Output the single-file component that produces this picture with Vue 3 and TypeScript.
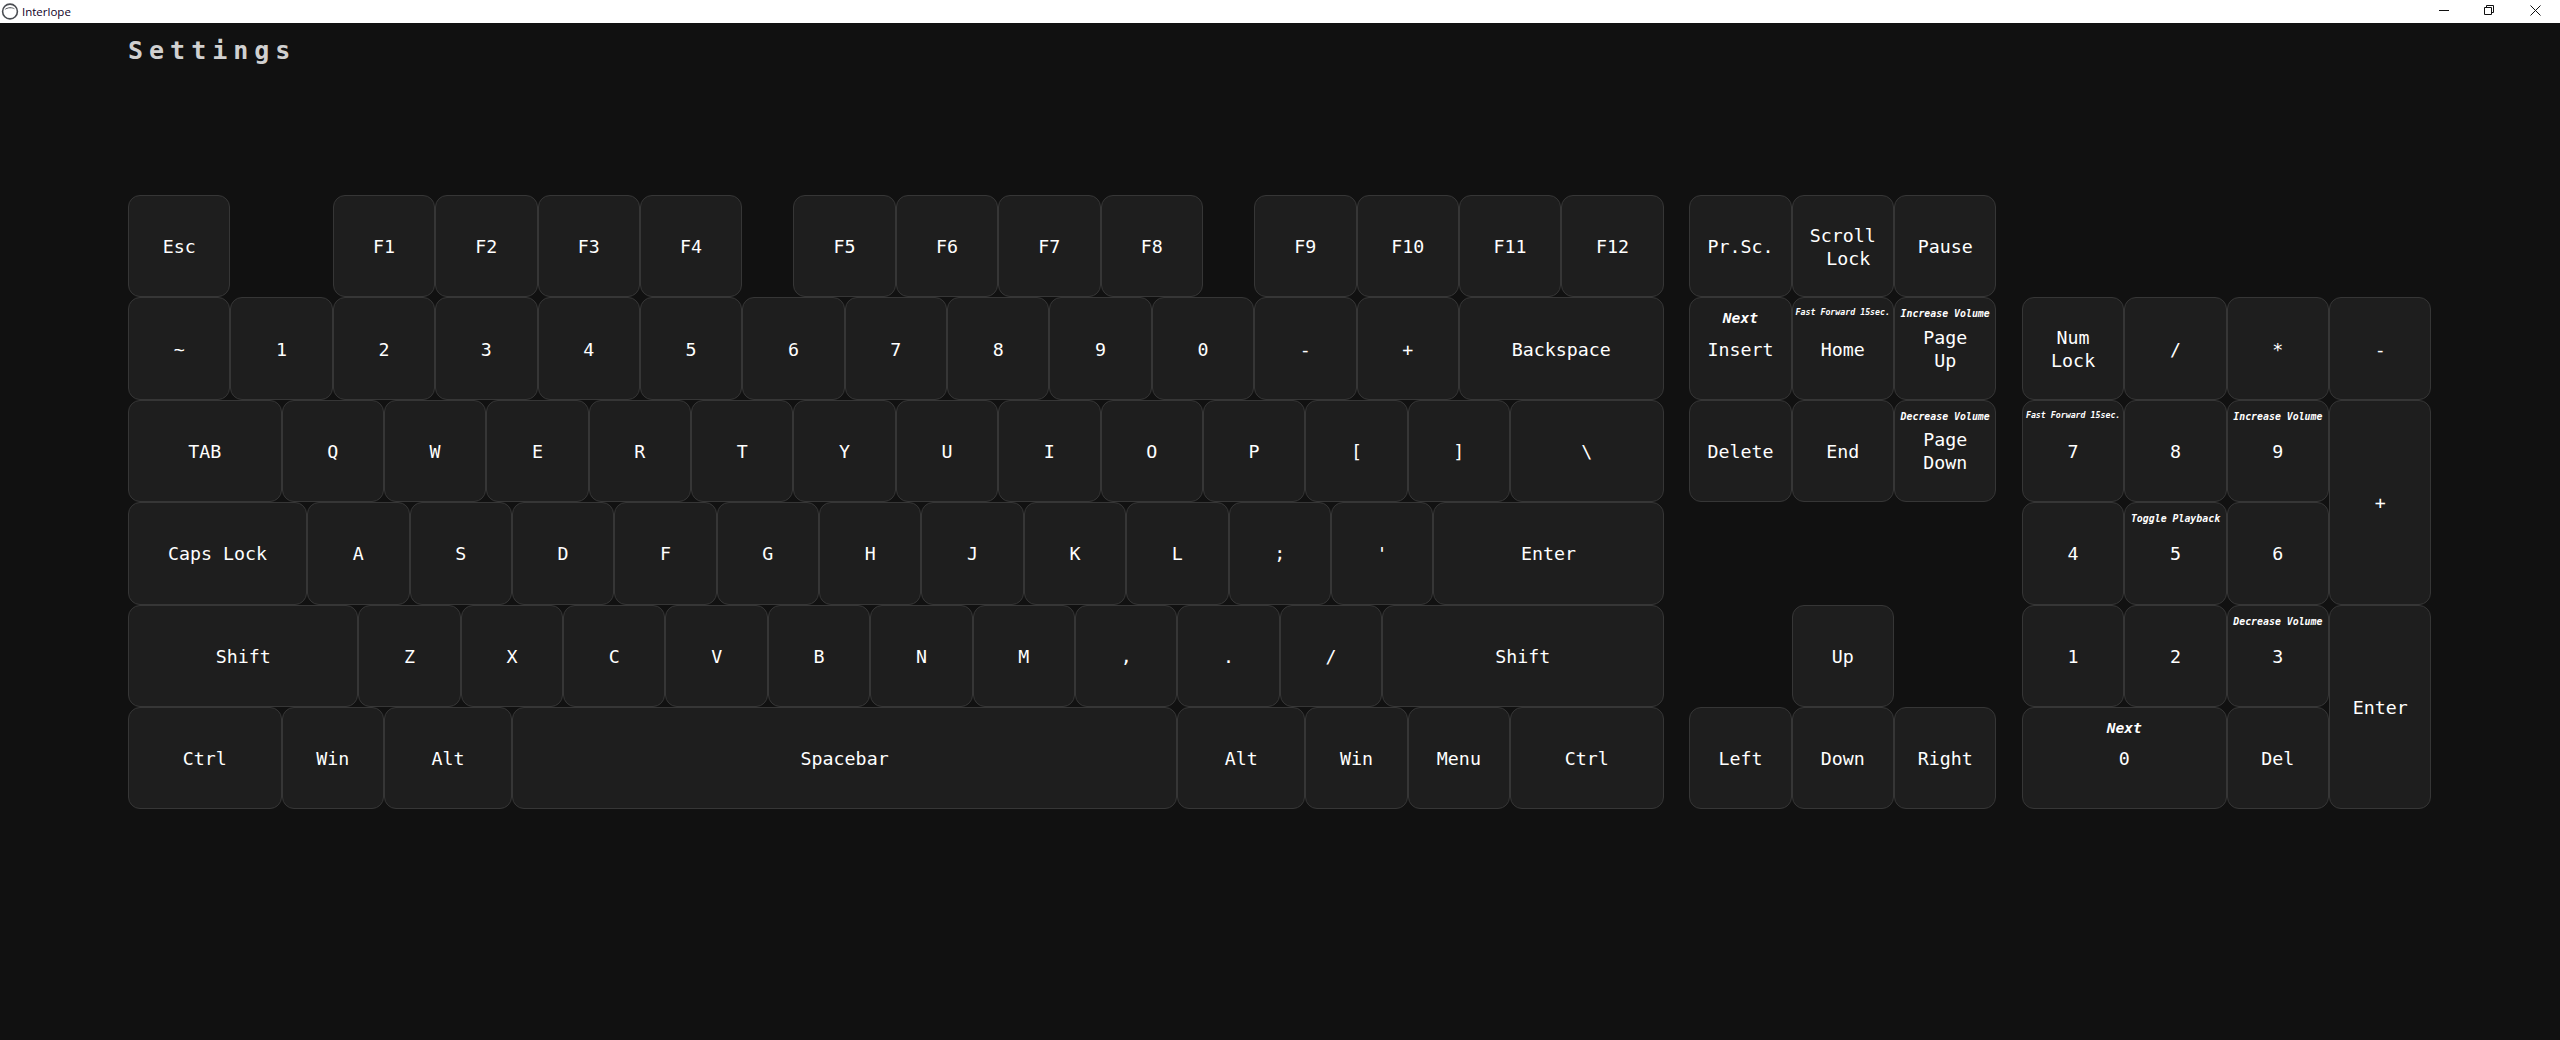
<script setup lang="ts">
interface Key {
  label: string
  span?: number
  rows?: number
  sub?: string
  subKind?: 'next' | 'mid' | 'tiny'
}
interface Placed extends Key {
  col: number
  row: number
}

const U = 4 // grid tracks per key unit

const rows: { row: number; start: number; keys: (Key | number)[] }[] = [
  {
    row: 1,
    start: 0,
    keys: [
      { label: 'Esc' }, 1,
      { label: 'F1' }, { label: 'F2' }, { label: 'F3' }, { label: 'F4' }, 0.5,
      { label: 'F5' }, { label: 'F6' }, { label: 'F7' }, { label: 'F8' }, 0.5,
      { label: 'F9' }, { label: 'F10' }, { label: 'F11' }, { label: 'F12' }, 0.25,
      { label: 'Pr.Sc.' }, { label: 'Scroll\n\u00a0Lock' }, { label: 'Pause' }
    ]
  },
  {
    row: 2,
    start: 0,
    keys: [
      ...['~', '1', '2', '3', '4', '5', '6', '7', '8', '9', '0', '-', '+'].map((label) => ({ label })),
      { label: 'Backspace', span: 2 }, 0.25,
      { label: 'Insert', sub: 'Next', subKind: 'next' },
      { label: 'Home', sub: 'Fast Forward 15sec.', subKind: 'tiny' },
      { label: 'Page\nUp', sub: 'Increase Volume', subKind: 'mid' }, 0.25,
      { label: 'Num\nLock' }, { label: '/' }, { label: '*' }, { label: '-' }
    ]
  },
  {
    row: 3,
    start: 0,
    keys: [
      { label: 'TAB', span: 1.5 },
      ...['Q', 'W', 'E', 'R', 'T', 'Y', 'U', 'I', 'O', 'P', '[', ']'].map((label) => ({ label })),
      { label: '\\', span: 1.5 }, 0.25,
      { label: 'Delete' }, { label: 'End' },
      { label: 'Page\nDown', sub: 'Decrease Volume', subKind: 'mid' }, 0.25,
      { label: '7', sub: 'Fast Forward 15sec.', subKind: 'tiny' },
      { label: '8' },
      { label: '9', sub: 'Increase Volume', subKind: 'mid' },
      { label: '+', rows: 2 }
    ]
  },
  {
    row: 4,
    start: 0,
    keys: [
      { label: 'Caps Lock', span: 1.75 },
      ...['A', 'S', 'D', 'F', 'G', 'H', 'J', 'K', 'L', ';', "'"].map((label) => ({ label })),
      { label: 'Enter', span: 2.25 }, 3.5,
      { label: '4' },
      { label: '5', sub: 'Toggle Playback', subKind: 'mid' },
      { label: '6' }
    ]
  },
  {
    row: 5,
    start: 0,
    keys: [
      { label: 'Shift', span: 2.25 },
      ...['Z', 'X', 'C', 'V', 'B', 'N', 'M', ',', '.', '/'].map((label) => ({ label })),
      { label: 'Shift', span: 2.75 }, 1.25,
      { label: 'Up' }, 1.25,
      { label: '1' }, { label: '2' },
      { label: '3', sub: 'Decrease Volume', subKind: 'mid' },
      { label: 'Enter', rows: 2 }
    ]
  },
  {
    row: 6,
    start: 0,
    keys: [
      { label: 'Ctrl', span: 1.5 }, { label: 'Win' }, { label: 'Alt', span: 1.25 },
      { label: 'Spacebar', span: 6.5 },
      { label: 'Alt', span: 1.25 }, { label: 'Win' }, { label: 'Menu' },
      { label: 'Ctrl', span: 1.5 }, 0.25,
      { label: 'Left' }, { label: 'Down' }, { label: 'Right' }, 0.25,
      { label: '0', span: 2, sub: 'Next', subKind: 'next' },
      { label: 'Del' }
    ]
  }
]

const keys: Placed[] = rows.flatMap((r) => {
  let col = r.start
  const out: Placed[] = []
  for (const k of r.keys) {
    if (typeof k === 'number') {
      col += k * U
    } else {
      out.push({ ...k, col: col + 1, row: r.row })
      col += (k.span ?? 1) * U
    }
  }
  return out
})

function place(k: Placed): Record<string, string> {
  return {
    gridColumn: `${k.col} / span ${(k.span ?? 1) * U}`,
    gridRow: `${k.row} / span ${k.rows ?? 1}`
  }
}
</script>

<template>
  <div class="window">
    <header class="titlebar">
      <div class="app">
        <svg class="logo" width="18" height="18" viewBox="0 0 18 18">
          <circle cx="9" cy="8.5" r="7.4" fill="#fff" stroke="#4a4d52" stroke-width="1.6" />
          <path d="M3.6 7C5 3.4 12.6 3.2 14.4 6.7C12 4.8 6 4.8 3.6 7Z" fill="#3f4247" />
        </svg>
        <span class="app-name">Interlope</span>
      </div>
      <div class="controls">
        <svg width="45" height="23" viewBox="0 0 45 23"><path d="M14 10.5H24" stroke="#111" fill="none" /></svg>
        <svg width="45" height="23" viewBox="0 0 45 23">
          <path d="M14.5 7.5H21.5V14.5H14.5ZM16.5 7.5V5.5H23.5V12.5H21.5" stroke="#111" fill="none" />
        </svg>
        <svg width="45" height="23" viewBox="0 0 45 23"><path d="M15.5 5.5L25.5 15.5M25.5 5.5L15.5 15.5" stroke="#111" fill="none" /></svg>
      </div>
    </header>
    <main class="content">
      <h1 class="heading">Settings</h1>
      <div class="board">
        <div v-for="(k, i) in keys" :key="i" class="key" :style="place(k)">
          <span v-if="k.sub" class="sub" :class="k.subKind">{{ k.sub }}</span>
          <span class="label">{{ k.label }}</span>
        </div>
      </div>
    </main>
  </div>
</template>

<style>
html,
body {
  margin: 0;
  background: #111111;
}
</style>

<style scoped>
.window {
  width: 2560px;
  height: 1040px;
  display: flex;
  flex-direction: column;
  background: #111111;
  overflow: hidden;
}
.titlebar {
  height: 23px;
  flex: none;
  background: #ffffff;
  display: flex;
  align-items: center;
  justify-content: space-between;
}
.app {
  display: flex;
  align-items: center;
  gap: 3px;
  padding-left: 1px;
}
.logo {
  display: block;
}
.app-name {
  font-family: "Open Sans", "Noto Sans", sans-serif;
  font-size: 11.5px;
  color: #10001f;
}
.controls {
  display: flex;
}
.controls svg {
  display: block;
}
.content {
  flex: 1;
  padding: 0 128px;
}
.heading {
  margin: 0;
  padding-top: 12px;
  height: 172px;
  box-sizing: border-box;
  font-family: "DejaVu Sans Mono", monospace;
  font-size: 25px;
  line-height: 32px;
  font-weight: 700;
  letter-spacing: 6px;
  color: #d0d0d0;
}
.board {
  display: grid;
  grid-template-columns: repeat(90, 25.6px);
  grid-auto-rows: 102.4px;
}
.key {
  position: relative;
  box-sizing: border-box;
  border: 1px solid #363636;
  border-radius: 12px;
  background: #1e1e1e;
  color: #ffffff;
  display: flex;
  align-items: center;
  justify-content: center;
  padding-top: 1px;
  font-family: "DejaVu Sans Mono", monospace;
  font-size: 18.3px;
  line-height: 23px;
  text-align: center;
}
.label {
  white-space: pre;
}
.sub {
  position: absolute;
  left: 0;
  right: 0;
  font-weight: 700;
  font-style: italic;
  white-space: nowrap;
}
.next {
  top: 10px;
  font-size: 14.6px;
  line-height: 20px;
}
.mid {
  top: 9px;
  font-size: 9.9px;
  line-height: 14px;
}
.tiny {
  top: 8px;
  font-size: 8.25px;
  line-height: 12px;
}
</style>
